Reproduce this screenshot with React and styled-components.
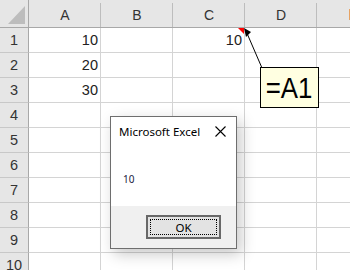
import React from 'react';
import styled, { createGlobalStyle } from 'styled-components';

const GlobalStyle = createGlobalStyle`
  html, body {
    margin: 0;
    padding: 0;
    background: #ffffff;
  }
  body {
    width: 350px;
    height: 270px;
    overflow: hidden;
    font-family: "Liberation Sans", Arial, sans-serif;
  }
`;

const COLS = ['A', 'B', 'C', 'D', 'E'];
const ROWS = [1, 2, 3, 4, 5, 6, 7, 8, 9, 10];
const VALUES = { A1: '10', A2: '20', A3: '30', C1: '10' };

export default function App() {
  return (
    <>
      <GlobalStyle />
      <Sheet>
        <Grid>
          <Corner />
          {COLS.map((c) => (
            <ColHeader key={c}>
              {c === 'E' ? <EdgeMark /> : c}
            </ColHeader>
          ))}
          {ROWS.map((r) => (
            <React.Fragment key={r}>
              <RowHeader>{r}</RowHeader>
              {COLS.map((c) => (
                <Cell key={c}>
                  {VALUES[c + r]}
                  {c === 'C' && r === 1 && <CommentFlag />}
                </Cell>
              ))}
            </React.Fragment>
          ))}
        </Grid>

        <Arrow width="30" height="45" viewBox="0 0 30 45">
          <line x1="3" y1="3" x2="19" y2="40" stroke="#000" strokeWidth="1" />
          <polygon points="1,0 8,4 3,9" fill="#000" />
        </Arrow>
        <Comment>
          <CommentText>=A1</CommentText>
        </Comment>

        <Dialog>
          <TitleBar>
            <Title>Microsoft Excel</Title>
            <CloseIcon width="11" height="11" viewBox="0 0 11 11">
              <path d="M0.5 0.5 L10.5 10.5 M10.5 0.5 L0.5 10.5" stroke="#000" strokeWidth="1.1" />
            </CloseIcon>
          </TitleBar>
          <Message>10</Message>
          <Footer>
            <OkButton>
              <span>OK</span>
            </OkButton>
          </Footer>
        </Dialog>
      </Sheet>
    </>
  );
}

const Sheet = styled.div`
  position: relative;
  width: 350px;
  height: 270px;
  overflow: hidden;
`;

const Grid = styled.div`
  display: grid;
  grid-template-columns: 29px repeat(5, 72px);
  grid-template-rows: 28px repeat(10, 25px);
`;

const Corner = styled.div`
  position: relative;
  background: #e6e6e6;
  border-right: 1px solid #a8a8a8;
  border-bottom: 1px solid #a8a8a8;

  &::after {
    content: '';
    position: absolute;
    left: 8px;
    top: 6px;
    width: 17px;
    height: 18px;
    background: #bdbdbd;
    clip-path: polygon(100% 0, 100% 100%, 0 100%);
  }
`;

const ColHeader = styled.div`
  position: relative;
  display: flex;
  align-items: center;
  justify-content: center;
  padding-top: 2px;
  background-color: #e6e6e6;
  background-image: linear-gradient(#bdbdbd, #bdbdbd);
  background-size: 1px calc(100% - 3px);
  background-position: right bottom;
  background-repeat: no-repeat;
  border-bottom: 1px solid #a8a8a8;
  font-size: 14px;
  color: #333;
`;

const EdgeMark = styled.span`
  position: absolute;
  left: 32px;
  top: 9px;
  width: 2px;
  height: 11px;
  background: #e7a363;
`;

const RowHeader = styled.div`
  display: flex;
  align-items: center;
  justify-content: center;
  background: #e6e6e6;
  border-right: 1px solid #a8a8a8;
  border-bottom: 1px solid #c8c8c8;
  font-size: 14.5px;
  color: #333;
`;

const Cell = styled.div`
  position: relative;
  display: flex;
  align-items: center;
  justify-content: flex-end;
  padding-right: 2px;
  border-right: 1px solid #d4d4d4;
  border-bottom: 1px solid #d4d4d4;
  font-size: 14.5px;
  color: #222;
`;

const CommentFlag = styled.span`
  position: absolute;
  right: 0;
  top: 0;
  width: 6px;
  height: 6px;
  background: #ff0000;
  clip-path: polygon(0 0, 100% 0, 100% 100%);
`;

const Arrow = styled.svg`
  position: absolute;
  left: 243px;
  top: 28px;
`;

const Comment = styled.div`
  position: absolute;
  left: 260px;
  top: 67px;
  width: 57px;
  height: 39px;
  display: flex;
  align-items: center;
  justify-content: center;
  background: #ffffe1;
  border: 1px solid #000;
`;

const CommentText = styled.span`
  display: inline-block;
  font-family: "Liberation Sans", Arial, sans-serif;
  font-size: 30px;
  line-height: 1;
  color: #000;
  transform: scaleX(0.86);
`;

const Dialog = styled.div`
  position: absolute;
  left: 110px;
  top: 116px;
  width: 125px;
  height: 131px;
  display: flex;
  flex-direction: column;
  background: #ffffff;
  border: 1px solid #6e6e6e;
  box-shadow: 4px 5px 14px rgba(0, 0, 0, 0.22);
  font-family: "Noto Sans", "Liberation Sans", sans-serif;
`;

const TitleBar = styled.div`
  height: 28px;
  display: flex;
  align-items: center;
  justify-content: space-between;
  padding: 0 10px 0 8px;
`;

const Title = styled.span`
  font-size: 11.5px;
  color: #000;
`;

const CloseIcon = styled.svg`
  display: block;
`;

const Message = styled.div`
  flex: 1;
  display: flex;
  align-items: center;
  padding-left: 12px;
  padding-top: 6px;
  font-size: 10px;
  color: #1a1a40;
`;

const Footer = styled.div`
  height: 42px;
  display: flex;
  justify-content: flex-end;
  align-items: flex-start;
  padding: 9px 15px 0 0;
  box-sizing: border-box;
  background: #f0f0f0;
`;

const OkButton = styled.div`
  width: 75px;
  height: 24px;
  box-sizing: border-box;
  padding: 2px;
  border: 2px solid #686868;
  background: #e3e3e3;

  span {
    display: flex;
    align-items: center;
    justify-content: center;
    height: 100%;
    box-sizing: border-box;
    border: 1px dotted #000;
    font-size: 11.5px;
    color: #000;
  }
`;
